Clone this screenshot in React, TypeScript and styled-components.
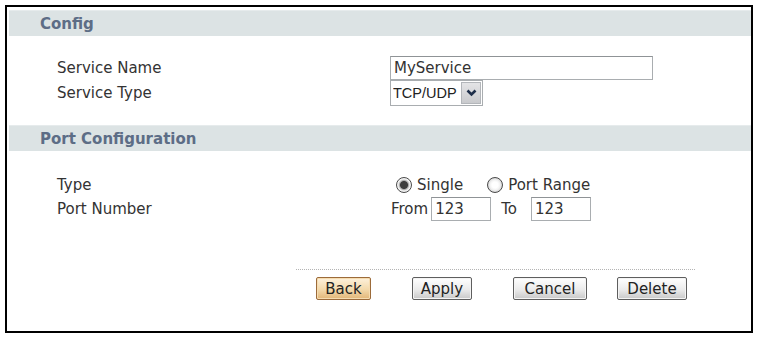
import React, { useState } from "react";
import styled, { createGlobalStyle } from "styled-components";

const GlobalStyle = createGlobalStyle`
  body {
    margin: 0;
    background: #fff;
    font-family: "DejaVu Sans", Verdana, sans-serif;
    color: #333;
  }
`;

const App: React.FC = () => {
  const [name, setName] = useState("MyService");
  const [serviceType, setServiceType] = useState("TCP/UDP");
  const [portType, setPortType] = useState<"single" | "range">("single");
  const [from, setFrom] = useState("123");
  const [to, setTo] = useState("123");

  return (
    <Page>
      <GlobalStyle />
      <Panel>
        <SectionHeader>Config</SectionHeader>
        <FieldGroup $top={19} $bottom={19}>
          <Row $h={25}>
            <Label>Service Name</Label>
            <TextInput $w={263} value={name} onChange={(e) => setName(e.target.value)} />
          </Row>
          <Row $h={26}>
            <Label>Service Type</Label>
            <SelectBox>
              <Select value={serviceType} onChange={(e) => setServiceType(e.target.value)}>
                <option>TCP/UDP</option>
                <option>TCP</option>
                <option>UDP</option>
              </Select>
              <ArrowBox>
                <svg width="11" height="8" viewBox="0 0 11 8">
                  <path d="M1.5 1.5 L5.5 5.5 L9.5 1.5" fill="none" stroke="#1f2f4a" strokeWidth="2.6" />
                </svg>
              </ArrowBox>
            </SelectBox>
          </Row>
        </FieldGroup>

        <SectionHeader>Port Configuration</SectionHeader>
        <FieldGroup $top={22} $bottom={0}>
          <Row $h={23}>
            <Label>Type</Label>
            <Controls>
              <RadioOption $ml={6} onClick={() => setPortType("single")}>
                <Radio $checked={portType === "single"} />
                <span>Single</span>
              </RadioOption>
              <RadioOption $ml={24} onClick={() => setPortType("range")}>
                <Radio $checked={portType === "range"} />
                <span>Port Range</span>
              </RadioOption>
            </Controls>
          </Row>
          <Row $h={26}>
            <Label>Port Number</Label>
            <Controls>
              <InlineText $ml={1}>From</InlineText>
              <TextInput $w={60} $ml={3} value={from} onChange={(e) => setFrom(e.target.value)} />
              <InlineText $ml={10}>To</InlineText>
              <TextInput $w={60} $ml={14} value={to} onChange={(e) => setTo(e.target.value)} />
            </Controls>
          </Row>
        </FieldGroup>

        <Footer>
          <Button $variant="back" $w={55} $ml={20}>Back</Button>
          <Button $w={60} $ml={41}>Apply</Button>
          <Button $w={74} $ml={41}>Cancel</Button>
          <Button $w={70} $ml={30}>Delete</Button>
        </Footer>
      </Panel>
    </Page>
  );
};

export default App;

const Page = styled.div`
  padding: 5px;
`;

const Panel = styled.div`
  box-sizing: border-box;
  width: 748px;
  height: 328px;
  border: 2px solid #000;
  padding: 3px 0 0 2px;
  background: #fff;
`;

const SectionHeader = styled.div`
  height: 26px;
  display: flex;
  align-items: center;
  padding-left: 31px;
  background: #dce3e4;
  border-top: 1px solid #e6ebec;
  box-sizing: border-box;
  font-weight: bold;
  font-size: 15px;
  color: #5d6d86;
`;

const FieldGroup = styled.div<{ $top: number; $bottom: number }>`
  padding: ${(p) => p.$top}px 0 ${(p) => p.$bottom}px 0;
  display: flex;
  flex-direction: column;
`;

const Row = styled.div<{ $h: number }>`
  display: grid;
  grid-template-columns: 381px 1fr;
  align-items: center;
  height: ${(p) => p.$h}px;
`;

const Label = styled.div`
  padding-left: 48px;
  font-size: 15px;
  color: #333;
`;

const Controls = styled.div`
  display: flex;
  align-items: center;
`;

const TextInput = styled.input<{ $w: number; $ml?: number }>`
  box-sizing: border-box;
  width: ${(p) => p.$w}px;
  height: 24px;
  margin: 0 0 0 ${(p) => p.$ml ?? 0}px;
  padding: 0 3px;
  border: 1px solid #a9adb0;
  border-top-color: #8f9396;
  font-family: "DejaVu Sans", Verdana, sans-serif;
  font-size: 15px;
  color: #333;
  outline: none;
`;

const SelectBox = styled.div`
  box-sizing: border-box;
  width: 93px;
  height: 26px;
  display: flex;
  align-items: center;
  border: 1px solid #a9adb0;
  padding: 1px;
`;

const Select = styled.select`
  appearance: none;
  border: none;
  outline: none;
  background: transparent;
  flex: 1;
  height: 100%;
  padding: 0 0 0 1px;
  font-family: "Liberation Sans", Arial, sans-serif;
  font-size: 14.5px;
  color: #222;
`;

const ArrowBox = styled.div`
  box-sizing: border-box;
  width: 20px;
  height: 22px;
  display: flex;
  align-items: center;
  justify-content: center;
  background: linear-gradient(#e4e4e6, #c9cacd);
  border: 1px solid #b3b6ba;
`;

const RadioOption = styled.label<{ $ml: number }>`
  display: flex;
  align-items: center;
  gap: 5px;
  margin-left: ${(p) => p.$ml}px;
  font-size: 15px;
  color: #333;
  cursor: pointer;
`;

const Radio = styled.span<{ $checked: boolean }>`
  box-sizing: border-box;
  width: 16px;
  height: 16px;
  border-radius: 50%;
  border: 1px solid #4a4a4a;
  background: ${(p) =>
    p.$checked
      ? "radial-gradient(circle, #3d3d3d 0 3.6px, #9a9a9a 4.2px, #e8e8e8 5.6px, #fafafa 7px)"
      : "radial-gradient(circle, #ffffff 0 3px, #f2f2f2 5px, #d8d8d8 7px)"};
`;

const InlineText = styled.span<{ $ml: number }>`
  margin-left: ${(p) => p.$ml}px;
  font-size: 15px;
  color: #333;
`;

const Footer = styled.div`
  margin: 47px 0 0 287px;
  width: 399px;
  border-top: 1px dotted #b4b4b4;
  padding-top: 7px;
  display: flex;
`;

const Button = styled.button<{ $variant?: "back"; $w: number; $ml: number }>`
  box-sizing: border-box;
  width: ${(p) => p.$w}px;
  height: 23px;
  margin-left: ${(p) => p.$ml}px;
  padding: 0;
  font-family: "DejaVu Sans", Verdana, sans-serif;
  font-size: 15px;
  color: #222;
  border-radius: 2px;
  cursor: pointer;
  border: 1px solid ${(p) => (p.$variant === "back" ? "#9c6b3a" : "#5e5e5e")};
  background: ${(p) =>
    p.$variant === "back"
      ? "linear-gradient(#fdf1dc, #f3d9ab 55%, #e2b678)"
      : "linear-gradient(#ffffff, #ebebeb 55%, #c8c8c8)"};
  box-shadow: inset 0 0 0 1px ${(p) => (p.$variant === "back" ? "#f6dcb0" : "#f4f4f4")};
`;
